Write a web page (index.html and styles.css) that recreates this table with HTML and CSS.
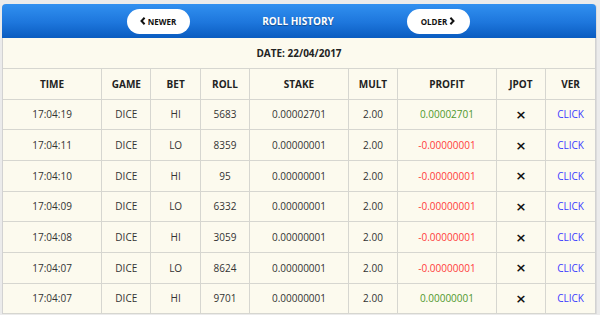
FILE: index.html
```html
<!DOCTYPE html>
<html lang="en">
<head>
    <meta charset="UTF-8">
    <title>Roll History</title>
    <link rel="stylesheet" href="styles.css">
</head>
<body>
    <div class="panel">
        <div class="panel-head">
            <button class="nav-btn">
                <svg class="chev" width="6" height="8" viewBox="0 0 6 8"><path d="M4.6 0.7 L1.5 4 L4.6 7.3" fill="none" stroke="#111" stroke-width="2"/></svg>NEWER
            </button>
            <div class="title">ROLL HISTORY</div>
            <button class="nav-btn">
                OLDER<svg class="chev chev-right" width="6" height="8" viewBox="0 0 6 8"><path d="M1.4 0.7 L4.5 4 L1.4 7.3" fill="none" stroke="#111" stroke-width="2"/></svg>
            </button>
        </div>
        <div class="date-row">DATE: 22/04/2017</div>
        <table class="history">
            <colgroup>
                <col class="w2"><col class="w1"><col class="w1"><col class="w1"><col class="w2"><col class="w1"><col class="w2"><col class="w1"><col class="w1">
            </colgroup>
            <thead>
                <tr>
                    <th>TIME</th><th>GAME</th><th>BET</th><th>ROLL</th><th>STAKE</th><th>MULT</th><th>PROFIT</th><th>JPOT</th><th>VER</th>
                </tr>
            </thead>
            <tbody>
                <tr>
                    <td>17:04:19</td><td>DICE</td><td>HI</td><td>5683</td><td>0.00002701</td><td>2.00</td>
                    <td class="win">0.00002701</td><td class="jpot">&times;</td><td><a href="#">CLICK</a></td>
                </tr>
                <tr>
                    <td>17:04:11</td><td>DICE</td><td>LO</td><td>8359</td><td>0.00000001</td><td>2.00</td>
                    <td class="loss">-0.00000001</td><td class="jpot">&times;</td><td><a href="#">CLICK</a></td>
                </tr>
                <tr>
                    <td>17:04:10</td><td>DICE</td><td>HI</td><td>95</td><td>0.00000001</td><td>2.00</td>
                    <td class="loss">-0.00000001</td><td class="jpot">&times;</td><td><a href="#">CLICK</a></td>
                </tr>
                <tr>
                    <td>17:04:09</td><td>DICE</td><td>LO</td><td>6332</td><td>0.00000001</td><td>2.00</td>
                    <td class="loss">-0.00000001</td><td class="jpot">&times;</td><td><a href="#">CLICK</a></td>
                </tr>
                <tr>
                    <td>17:04:08</td><td>DICE</td><td>HI</td><td>3059</td><td>0.00000001</td><td>2.00</td>
                    <td class="loss">-0.00000001</td><td class="jpot">&times;</td><td><a href="#">CLICK</a></td>
                </tr>
                <tr>
                    <td>17:04:07</td><td>DICE</td><td>LO</td><td>8624</td><td>0.00000001</td><td>2.00</td>
                    <td class="loss">-0.00000001</td><td class="jpot">&times;</td><td><a href="#">CLICK</a></td>
                </tr>
                <tr>
                    <td>17:04:07</td><td>DICE</td><td>HI</td><td>9701</td><td>0.00000001</td><td>2.00</td>
                    <td class="win">0.00000001</td><td class="jpot">&times;</td><td><a href="#">CLICK</a></td>
                </tr>
            </tbody>
        </table>
    </div>
</body>
</html>
```

FILE: styles.css
```css
* {
    margin: 0;
    padding: 0;
    box-sizing: border-box;
}

body {
    font-family: "Open Sans", "Liberation Sans", sans-serif;
    background: #ebebeb;
    padding: 4px 4px 0 2px;
    color: #333;
    overflow: hidden;
}

.panel {
    width: 594px;
    background: #fcfaee;
    border-left: 1px solid #d2d2d2;
    border-right: 1px solid #d2d2d2;
    border-radius: 4px 4px 0 0;
    box-shadow: 1px 0 0 #dcdcdc;
}

.panel-head {
    height: 34px;
    display: grid;
    grid-template-columns: 140px 1fr 140px;
    align-items: center;
    justify-items: center;
    padding: 0 88px 0 86px;
    background: linear-gradient(to bottom, #3190f0 0%, #1d76dc 55%, #0a5cc0 100%);
    border-radius: 4px 4px 0 0;
    margin: 0 -1px;
}

.title {
    color: #fff;
    font-size: 10px;
    font-weight: 700;
    text-shadow: 0 1px 1px rgba(0, 0, 0, 0.35);
}

.nav-btn {
    width: 63px;
    height: 25px;
    border: none;
    border-radius: 13px;
    background: #fff;
    font-family: inherit;
    font-size: 8px;
    font-weight: 700;
    color: #111;
    display: flex;
    align-items: center;
    justify-content: center;
}

.chev {
    margin-right: 2px;
}

.chev-right {
    margin: 0 0 0 2px;
}

.date-row {
    height: 31px;
    line-height: 31px;
    text-align: center;
    font-size: 10px;
    font-weight: 700;
    color: #222;
    border-bottom: 1px solid #d6d6d0;
}

.history {
    width: 100%;
    border-collapse: collapse;
    table-layout: fixed;
}

.w2 {
    width: 16.66%;
}

.w1 {
    width: 8.33%;
}

.history th,
.history td {
    text-align: center;
    border-left: 1px solid #d6d6d0;
    border-bottom: 1px solid #d6d6d0;
}

.history th:first-child,
.history td:first-child {
    border-left: none;
}

.history th {
    height: 30px;
    font-size: 10px;
    font-weight: 700;
    color: #222;
}

.history td {
    height: 30.7px;
    font-size: 10px;
    color: #333;
}

.history .win {
    color: #4f982c;
}

.history .loss {
    color: #ff3a3a;
}

.history .jpot {
    font-family: "DejaVu Sans", sans-serif;
    font-size: 13px;
    font-weight: 700;
    color: #111;
}

.history a {
    color: #3b3bff;
    text-decoration: none;
}
```
